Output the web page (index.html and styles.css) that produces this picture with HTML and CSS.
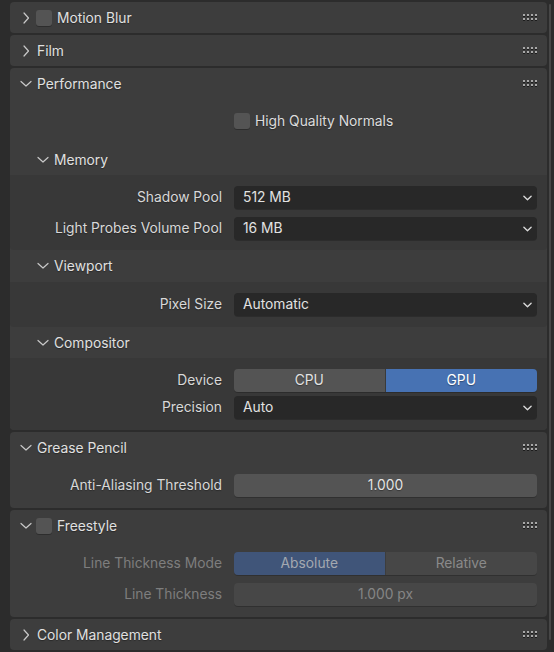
FILE: index.html
```html
<!DOCTYPE html>
<html>
<head>
<meta charset="utf-8">
<link rel="stylesheet" href="styles.css">
</head>
<body>
<div class="editor">
  <div class="panels">
    <section class="panel">
      <div class="phead">
        <svg class="chev" viewBox="0 0 12 12"><path d="M4 1 L8.5 6 L4 11"/></svg>
        <span class="cb"></span>
        <span class="title">Motion Blur</span>
        <svg class="grip" viewBox="0 0 16 8"><g class="gd"><rect x="0" y="2" width="2" height="1"/><rect x="4" y="2" width="2" height="1"/><rect x="8" y="2" width="2" height="1"/><rect x="12" y="2" width="2" height="1"/><rect x="0" y="6" width="2" height="1"/><rect x="4" y="6" width="2" height="1"/><rect x="8" y="6" width="2" height="1"/><rect x="12" y="6" width="2" height="1"/></g><g class="gl"><rect x="0" y="0" width="2" height="2"/><rect x="4" y="0" width="2" height="2"/><rect x="8" y="0" width="2" height="2"/><rect x="12" y="0" width="2" height="2"/><rect x="0" y="4" width="2" height="2"/><rect x="4" y="4" width="2" height="2"/><rect x="8" y="4" width="2" height="2"/><rect x="12" y="4" width="2" height="2"/></g></svg>
      </div>
    </section>

    <section class="panel">
      <div class="phead">
        <svg class="chev" viewBox="0 0 12 12"><path d="M4 1 L8.5 6 L4 11"/></svg>
        <span class="title">Film</span>
        <svg class="grip" viewBox="0 0 16 8"><g class="gd"><rect x="0" y="2" width="2" height="1"/><rect x="4" y="2" width="2" height="1"/><rect x="8" y="2" width="2" height="1"/><rect x="12" y="2" width="2" height="1"/><rect x="0" y="6" width="2" height="1"/><rect x="4" y="6" width="2" height="1"/><rect x="8" y="6" width="2" height="1"/><rect x="12" y="6" width="2" height="1"/></g><g class="gl"><rect x="0" y="0" width="2" height="2"/><rect x="4" y="0" width="2" height="2"/><rect x="8" y="0" width="2" height="2"/><rect x="12" y="0" width="2" height="2"/><rect x="0" y="4" width="2" height="2"/><rect x="4" y="4" width="2" height="2"/><rect x="8" y="4" width="2" height="2"/><rect x="12" y="4" width="2" height="2"/></g></svg>
      </div>
    </section>

    <section class="panel perf">
      <div class="phead">
        <svg class="chev" viewBox="0 0 12 12"><path d="M1 3.5 L6 8 L11 3.5"/></svg>
        <span class="title">Performance</span>
        <svg class="grip" viewBox="0 0 16 8"><g class="gd"><rect x="0" y="2" width="2" height="1"/><rect x="4" y="2" width="2" height="1"/><rect x="8" y="2" width="2" height="1"/><rect x="12" y="2" width="2" height="1"/><rect x="0" y="6" width="2" height="1"/><rect x="4" y="6" width="2" height="1"/><rect x="8" y="6" width="2" height="1"/><rect x="12" y="6" width="2" height="1"/></g><g class="gl"><rect x="0" y="0" width="2" height="2"/><rect x="4" y="0" width="2" height="2"/><rect x="8" y="0" width="2" height="2"/><rect x="12" y="0" width="2" height="2"/><rect x="0" y="4" width="2" height="2"/><rect x="4" y="4" width="2" height="2"/><rect x="8" y="4" width="2" height="2"/><rect x="12" y="4" width="2" height="2"/></g></svg>
      </div>
      <div class="checkrow">
        <span class="cb"></span>
        <span class="label">High Quality Normals</span>
      </div>

      <div class="shead">
        <svg class="chev" viewBox="0 0 12 12"><path d="M1 3.5 L6 8 L11 3.5"/></svg>
        <span class="title">Memory</span>
      </div>
      <div class="sbody mem">
        <span class="lbl">Shadow Pool</span>
        <div class="menu"><span>512 MB</span><svg class="dd" viewBox="0 0 10 6"><path d="M1 1 L5 5 L9 1"/></svg></div>
        <span class="lbl">Light Probes Volume Pool</span>
        <div class="menu"><span>16 MB</span><svg class="dd" viewBox="0 0 10 6"><path d="M1 1 L5 5 L9 1"/></svg></div>
      </div>

      <div class="shead vp">
        <svg class="chev" viewBox="0 0 12 12"><path d="M1 3.5 L6 8 L11 3.5"/></svg>
        <span class="title">Viewport</span>
      </div>
      <div class="sbody">
        <span class="lbl">Pixel Size</span>
        <div class="menu"><span>Automatic</span><svg class="dd" viewBox="0 0 10 6"><path d="M1 1 L5 5 L9 1"/></svg></div>
      </div>

      <div class="shead">
        <svg class="chev" viewBox="0 0 12 12"><path d="M1 3.5 L6 8 L11 3.5"/></svg>
        <span class="title">Compositor</span>
      </div>
      <div class="sbody comp">
        <span class="lbl">Device</span>
        <div class="toggle"><span class="opt">CPU</span><span class="opt on">GPU</span></div>
        <span class="lbl">Precision</span>
        <div class="menu"><span>Auto</span><svg class="dd" viewBox="0 0 10 6"><path d="M1 1 L5 5 L9 1"/></svg></div>
      </div>
    </section>

    <section class="panel gp">
      <div class="phead">
        <svg class="chev" viewBox="0 0 12 12"><path d="M1 3.5 L6 8 L11 3.5"/></svg>
        <span class="title">Grease Pencil</span>
        <svg class="grip" viewBox="0 0 16 8"><g class="gd"><rect x="0" y="2" width="2" height="1"/><rect x="4" y="2" width="2" height="1"/><rect x="8" y="2" width="2" height="1"/><rect x="12" y="2" width="2" height="1"/><rect x="0" y="6" width="2" height="1"/><rect x="4" y="6" width="2" height="1"/><rect x="8" y="6" width="2" height="1"/><rect x="12" y="6" width="2" height="1"/></g><g class="gl"><rect x="0" y="0" width="2" height="2"/><rect x="4" y="0" width="2" height="2"/><rect x="8" y="0" width="2" height="2"/><rect x="12" y="0" width="2" height="2"/><rect x="0" y="4" width="2" height="2"/><rect x="4" y="4" width="2" height="2"/><rect x="8" y="4" width="2" height="2"/><rect x="12" y="4" width="2" height="2"/></g></svg>
      </div>
      <div class="pbody">
        <span class="lbl">Anti-Aliasing Threshold</span>
        <div class="num">1.000</div>
      </div>
    </section>

    <section class="panel fs">
      <div class="phead">
        <svg class="chev" viewBox="0 0 12 12"><path d="M1 3.5 L6 8 L11 3.5"/></svg>
        <span class="cb"></span>
        <span class="title">Freestyle</span>
        <svg class="grip" viewBox="0 0 16 8"><g class="gd"><rect x="0" y="2" width="2" height="1"/><rect x="4" y="2" width="2" height="1"/><rect x="8" y="2" width="2" height="1"/><rect x="12" y="2" width="2" height="1"/><rect x="0" y="6" width="2" height="1"/><rect x="4" y="6" width="2" height="1"/><rect x="8" y="6" width="2" height="1"/><rect x="12" y="6" width="2" height="1"/></g><g class="gl"><rect x="0" y="0" width="2" height="2"/><rect x="4" y="0" width="2" height="2"/><rect x="8" y="0" width="2" height="2"/><rect x="12" y="0" width="2" height="2"/><rect x="0" y="4" width="2" height="2"/><rect x="4" y="4" width="2" height="2"/><rect x="8" y="4" width="2" height="2"/><rect x="12" y="4" width="2" height="2"/></g></svg>
      </div>
      <div class="pbody disabled">
        <span class="lbl">Line Thickness Mode</span>
        <div class="toggle"><span class="opt on">Absolute</span><span class="opt">Relative</span></div>
        <span class="lbl">Line Thickness</span>
        <div class="num">1.000 px</div>
      </div>
    </section>

    <section class="panel">
      <div class="phead">
        <svg class="chev" viewBox="0 0 12 12"><path d="M4 1 L8.5 6 L4 11"/></svg>
        <span class="title">Color Management</span>
        <svg class="grip" viewBox="0 0 16 8"><g class="gd"><rect x="0" y="2" width="2" height="1"/><rect x="4" y="2" width="2" height="1"/><rect x="8" y="2" width="2" height="1"/><rect x="12" y="2" width="2" height="1"/><rect x="0" y="6" width="2" height="1"/><rect x="4" y="6" width="2" height="1"/><rect x="8" y="6" width="2" height="1"/><rect x="12" y="6" width="2" height="1"/></g><g class="gl"><rect x="0" y="0" width="2" height="2"/><rect x="4" y="0" width="2" height="2"/><rect x="8" y="0" width="2" height="2"/><rect x="12" y="0" width="2" height="2"/><rect x="0" y="4" width="2" height="2"/><rect x="4" y="4" width="2" height="2"/><rect x="8" y="4" width="2" height="2"/><rect x="12" y="4" width="2" height="2"/></g></svg>
      </div>
    </section>
  </div>
  <div class="scrollbar"></div>
</div>
</body>
</html>
```

FILE: styles.css
```css
html, body {
  margin: 0;
  padding: 0;
  background: #2c2c2c;
}
body {
  width: 554px;
  height: 652px;
  overflow: hidden;
  font-family: Inter, "Noto Sans", "DejaVu Sans", sans-serif;
  font-size: 13.8px;
  color: #e0e0e0;
}
.editor {
  position: relative;
  height: 652px;
  padding: 2px 7px 0 10px;
  box-sizing: border-box;
}
.panels {
  display: flex;
  flex-direction: column;
  gap: 2px;
}
.panel {
  background: #3d3d3d;
  border-radius: 4px;
  overflow: hidden;
}
.phead {
  height: 31px;
  display: flex;
  align-items: center;
  padding: 0 8px 0 10px;
  box-sizing: border-box;
}
.chev {
  width: 12px;
  height: 12px;
  flex: none;
  fill: none;
  stroke: #c8c8c8;
  stroke-width: 1.2;
  stroke-linecap: round;
  stroke-linejoin: round;
}
.phead .chev { margin-right: 5px; }
.phead .cb { margin-left: -1px; margin-right: 5px; }
.title {
  color: #e0e0e0;
  flex: 1;
  text-shadow: 0 1px 1px rgba(0,0,0,0.35);
}
.cb {
  width: 16px;
  height: 16px;
  flex: none;
  border-radius: 3px;
  background: #545454;
  box-shadow: 0 1px 0 rgba(0,0,0,0.25);
}
.grip {
  width: 16px;
  height: 8px;
  flex: none;
  margin-top: 1px;
}
.grip .gl rect { fill: #a8a8a8; }
.grip .gd rect { fill: #1c1c1c; }

.checkrow {
  height: 45px;
  display: flex;
  align-items: center;
  padding-left: 224px;
  gap: 5px;
  box-sizing: border-box;
  padding-bottom: 1px;
}
.label {
  color: #dcdcdc;
  padding-bottom: 1px;
  text-shadow: 0 1px 1px rgba(0,0,0,0.3);
}

.shead {
  height: 31px;
  display: flex;
  align-items: center;
  padding-left: 27px;
}
.shead.vp { height: 32px; }
.shead .chev { margin-right: 5px; }

.sbody, .pbody {
  display: grid;
  grid-template-columns: 212px 1fr;
  column-gap: 12px;
  row-gap: 8px;
  padding: 11px 10px 11px 0;
  align-items: center;
}
.sbody {
  background: #383838;
  border-radius: 0 0 4px 4px;
}
.sbody.mem { padding-bottom: 10px; }
.sbody.comp { row-gap: 4px; }
.lbl {
  text-align: right;
  color: #d8d8d8;
  white-space: nowrap;
  padding-bottom: 2px;
  text-shadow: 0 1px 1px rgba(0,0,0,0.3);
}
.menu {
  height: 23px;
  border-radius: 4px;
  background: #282828;
  box-shadow: 0 1px 0 rgba(0,0,0,0.2);
  display: flex;
  align-items: center;
  padding: 0 5px 0 9px;
  color: #e2e2e2;
}
.menu span { flex: 1; padding-bottom: 2px; }
.dd {
  width: 9px;
  height: 6px;
  fill: none;
  stroke: #dadada;
  stroke-width: 1.5;
  stroke-linecap: round;
  stroke-linejoin: round;
}
.toggle {
  height: 23px;
  display: grid;
  grid-template-columns: 1fr 1fr;
  border-radius: 4px;
  overflow: hidden;
  box-shadow: 0 1px 0 rgba(0,0,0,0.2);
}
.opt {
  display: flex;
  align-items: center;
  justify-content: center;
  padding-bottom: 2px;
  background: #545454;
  color: #e2e2e2;
  text-shadow: 0 1px 1px rgba(0,0,0,0.35);
}
.opt:first-child { border-right: 1px solid #3a3a3a; }
.opt.on {
  background: #4772b3;
  color: #ffffff;
}
.num {
  height: 23px;
  box-sizing: border-box;
  padding-bottom: 2px;
  border-radius: 4px;
  background: #545454;
  box-shadow: 0 1px 0 rgba(0,0,0,0.2);
  display: flex;
  align-items: center;
  justify-content: center;
  color: #e4e4e4;
  text-shadow: 0 1px 1px rgba(0,0,0,0.35);
}
.pbody.disabled .lbl { color: #7e7e7e; text-shadow: none; }
.pbody.disabled .opt { background: #474747; color: #8a8a8a; text-shadow: none; }
.pbody.disabled .opt.on { background: #405579; color: #a3a8b0; }
.pbody.disabled .opt:first-child { border-right-color: #3d3d3d; }
.pbody.disabled .num { background: #474747; color: #858585; text-shadow: none; }

.scrollbar {
  position: absolute;
  top: 4px;
  right: 3px;
  width: 2px;
  height: 636px;
  border-radius: 1px;
  background: #474747;
}
```
